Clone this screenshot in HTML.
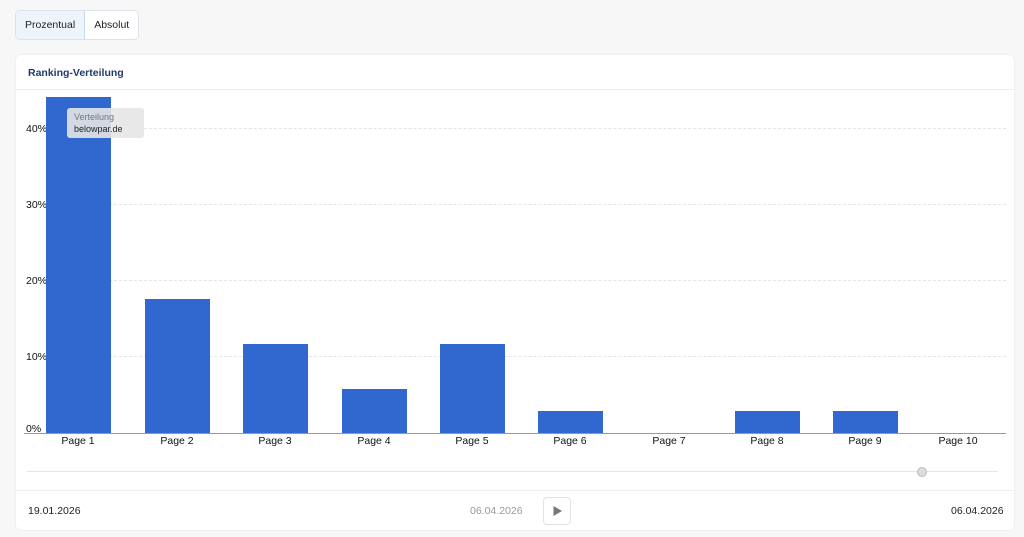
<!DOCTYPE html><html><head><style>
body{margin:0;background:#f7f7f7;font-family:"Liberation Sans",sans-serif;width:1024px;height:537px;position:relative;overflow:hidden}
.a{position:absolute}
.btns{left:15px;top:10px;height:28px;display:flex;border:1px solid #dde3ea;border-radius:5px;background:#fff;overflow:hidden;font-size:10.5px;color:#222}
.btns div{padding:0 9px;line-height:28px}
.card{left:16px;top:55px;width:998px;height:475px;background:#fff;border-radius:5px;box-shadow:0 0 2px rgba(0,0,0,.08)}
.bar{position:absolute;background:#3068cf;width:65px}
.lbl{position:absolute;top:435px;font-size:10.5px;color:#111;width:98px;text-align:center}
.y{position:absolute;left:26px;font-size:10.5px;color:#111}
.g{position:absolute;left:44px;width:962px;border-top:1px dashed #e4e4e4}
</style></head><body>
<div class="a btns"><div style="background:#eef4fd;border-right:1px solid #c8d8ef;padding:0 9px">Prozentual</div><div>Absolut</div></div>
<div class="a card"></div>
<div class="a" style="left:28px;top:67px;font-size:10.5px;font-weight:bold;color:#1f3a6b">Ranking-Verteilung</div>
<div class="a" style="left:16px;top:89px;width:998px;border-top:1px solid #eee"></div>
<div class="g" style="top:128px"></div><div class="g" style="top:204px"></div><div class="g" style="top:280px"></div><div class="g" style="top:356px"></div>
<div class="y" style="top:123px">40%</div><div class="y" style="top:199px">30%</div><div class="y" style="top:275px">20%</div><div class="y" style="top:351px">10%</div><div class="y" style="top:423px">0%</div>
<div class="bar" style="left:46px;top:97px;height:336px"></div>
<div class="bar" style="left:145px;top:299px;height:134px"></div>
<div class="bar" style="left:243px;top:344px;height:89px"></div>
<div class="bar" style="left:342px;top:389px;height:44px"></div>
<div class="bar" style="left:440px;top:344px;height:89px"></div>
<div class="bar" style="left:538px;top:411px;height:22px"></div>
<div class="bar" style="left:735px;top:411px;height:22px"></div>
<div class="bar" style="left:833px;top:411px;height:22px"></div>
<div class="a" style="left:24px;top:433px;width:982px;border-top:1px solid #999"></div>
<div class="lbl" style="left:29px">Page 1</div><div class="lbl" style="left:128px">Page 2</div><div class="lbl" style="left:226px">Page 3</div><div class="lbl" style="left:325px">Page 4</div><div class="lbl" style="left:423px">Page 5</div><div class="lbl" style="left:521px">Page 6</div><div class="lbl" style="left:620px">Page 7</div><div class="lbl" style="left:718px">Page 8</div><div class="lbl" style="left:816px">Page 9</div><div class="lbl" style="left:909px">Page 10</div>
<div class="a" style="left:67px;top:108px;width:77px;height:30px;background:rgba(230,230,230,.9);border-radius:3px;font-size:9px;line-height:12px;padding:3px 7px;box-sizing:border-box"><span style="color:#777">Verteilung</span><br><span style="color:#222">belowpar.de</span></div>
<div class="a" style="left:27px;top:471px;width:971px;border-top:1px solid #e6e6e6"></div>
<div class="a" style="left:917px;top:467px;width:8px;height:8px;border-radius:50%;background:#ddd;border:1px solid #bbb"></div>
<div class="a" style="left:16px;top:490px;width:998px;border-top:1px solid #f0f0f0"></div>
<div class="a" style="left:28px;top:505px;font-size:10.5px;color:#222">19.01.2026</div>
<div class="a" style="left:470px;top:505px;font-size:10.5px;color:#999">06.04.2026</div>
<div class="a" style="left:543px;top:497px;width:28px;height:28px;border:1px solid #e2e2e2;border-radius:4px;box-sizing:border-box"><svg width="28" height="28" style="position:absolute;left:-1px;top:-1px"><path d="M10.5 9 L19 14 L10.5 19Z" fill="#777"/></svg></div>
<div class="a" style="left:951px;top:505px;font-size:10.5px;color:#222">06.04.2026</div>
</body></html>
